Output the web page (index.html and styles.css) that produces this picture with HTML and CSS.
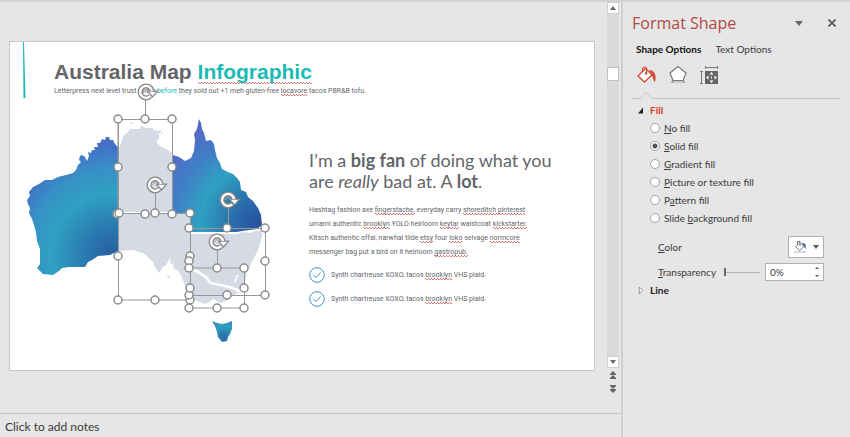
FILE: index.html
```html
<!DOCTYPE html>
<html lang="en">
<head>
<meta charset="utf-8">
<meta name="viewport" content="width=device-width, initial-scale=1">
<title>Australia Map Infographic</title>
<link rel="stylesheet" href="styles.css">
</head>
<body>
<div class="app">
  <main class="editor">
    <div class="workspace">
      <div class="stage">
        <article class="slide">
          <header class="slide-header">
            <svg class="accent" viewBox="0 0 3 56" aria-hidden="true"><path d="M0 0H1L2.500 56H.5Z" fill="#1cbab4"/></svg>
            <div>
              <h1 class="slide-title">Australia Map <span class="teal typo">Infographic</span></h1>
              <p class="subtitle">Letterpress next level trust funky <span class="teal">before</span> they sold out +1 meh gluten-free <span class="typo">locavore</span> tacos PBR&amp;B tofu.</p>
            </div>
          </header>
          <div class="slide-body">
            <svg class="map" viewBox="10 98 299 250" role="img" aria-label="Map of Australia">
              <defs>
                <radialGradient id="west" gradientUnits="userSpaceOnUse" cx="112" cy="254" r="135">
                  <stop offset="0" stop-color="#2860a0"/><stop offset=".18" stop-color="#2a76b0"/><stop offset=".45" stop-color="#2fa1c2"/><stop offset=".62" stop-color="#3791c6"/><stop offset=".8" stop-color="#4272c6"/><stop offset="1" stop-color="#5b55c4"/>
                </radialGradient>
                <radialGradient id="east" gradientUnits="userSpaceOnUse" cx="262" cy="226" r="125">
                  <stop offset="0" stop-color="#284f98"/><stop offset=".2" stop-color="#2a67aa"/><stop offset=".5" stop-color="#2fa1c2"/><stop offset=".72" stop-color="#417ec6"/><stop offset="1" stop-color="#5961c6"/>
                </radialGradient>
                <radialGradient id="south" gradientUnits="userSpaceOnUse" cx="224" cy="338" r="17">
                  <stop offset="0" stop-color="#286aa8"/><stop offset=".7" stop-color="#2f9fc0"/><stop offset="1" stop-color="#3a86c4"/>
                </radialGradient>
                <circle id="grip" r="4" fill="#fff" stroke="#8c8c8c" stroke-width="1.5"/>
                <g id="turn" fill="none">
                  <path d="M4.3 4.2A6 6 0 1 1 6 -1" stroke="#868686" stroke-width="5"/>
                  <path d="M1.5-.8H11.5L6.5 5Z" fill="#fff" stroke="#868686" stroke-width="1.2"/>
                  <path d="M4.3 4.2A6 6 0 1 1 6 -1" stroke="#fff" stroke-width="2.4"/>
                  <path d="M-2.5 0A2.6 2.6 0 0 1 2-1.6" stroke="#aaa" stroke-width="1"/>
                </g>
              </defs>
              <path fill="url(#west)" d="M118 147L115 144 113 140 110 140 109 137 106 137 105 140 102 139 100 143 97 143 98 147 94 147 95 150 92 150 91 153 88 152 89 156 87 161 85 157 82 155 80 156 79 160 81 162 78 165 76 170 73 173 66 175 58 177 52 180 45 180 39 184 33 187 29 192 30 196 27 200 28 204 30 208 29 213 32 219 34 225 36 232 37 241 40 249 40 259 40 264 37 268 43 274 53 275 59 271 62 268 69 267 85 267 88 262 92 260 98 256 110 255 118 251Z"/>
              <g fill="#d6dae4">
                <path d="M119 148L122 141 123 136 127 133 130 129 140 129 141 125 145 128 152 128 156 131 162 130 159 134 159 138 156 142 160 146 166 149 172 153V212H119ZM129 124l3-2 1 2zM161 132l2 1-1 2z"/>
                <path d="M119 214H190V298L187 291 184 283 181 275 177 270 173 268 174 262 171 265 170 258 166 265 163 267 159 273 156 269 153 262 148 257 143 253 138 252 134 250 119 251ZM166 277l5-2-2 3z"/>
                <path d="M191 234H237L242 232 250 233 255 231 262 230 262 236 258 250 252 262 247 273 243 290 232 287 220 284 212 283 207 276 198 271 191 268Z"/>
                <path d="M191 270L197 273 204 277 210 284 220 286 231 289 241 292 235 294 230 299 220 303 214 299 205 304 197 301 191 298Z"/>
              </g>
              <path d="M191 268L198 271 205 277 211 283 220 284.500 232 287 237 291 244 292M235 282l2-6 2 0" fill="none" stroke="#fff" stroke-width="1.500"/>
              <path fill="url(#east)" d="M173 155L179 157 185 161 191 158 194 151 195 140 194 134 197 129 199 119 201 123 202 129 204 133 206 141 211 140 214 144 215 150 217 158 220 163 222 169 228 172 233 174 237 178 240 182 241 190 246 192 248 197 253 201 258 208 261 215 262 225 257 229 249 230 242 231 237 232H190V213H173Z"/>
              <path fill="url(#south)" d="M212 321L217 323 222 324 227 323 232 321 232 329 230 334 228 337 227 341 222 342 218 337 217 332 215 326Z"/>
              <g fill="none" stroke="#979797">
                <path d="M118 119.500H172.500V213.500H118ZM118.500 119V300H190M190.500 213V308H244.500V268H190M155 213.500H190M190 228.500H265.500V295.500H190M145.500 97V119M155.500 190V213M228.500 205V228M217.500 248V268"/>
              </g>
              <g>
                <use href="#grip" x="118" y="119"/><use href="#grip" x="145" y="119"/><use href="#grip" x="172" y="119"/><use href="#grip" x="118" y="167"/><use href="#grip" x="172" y="167"/><use href="#grip" x="117" y="214"/><use href="#grip" x="145" y="214"/><use href="#grip" x="172" y="214"/>
                <use href="#grip" x="119" y="213"/><use href="#grip" x="155" y="213"/><use href="#grip" x="190" y="213"/><use href="#grip" x="118" y="256"/><use href="#grip" x="190" y="256"/><use href="#grip" x="118" y="300"/><use href="#grip" x="155" y="300"/><use href="#grip" x="190" y="300"/>
                <use href="#grip" x="189" y="228"/><use href="#grip" x="227" y="228"/><use href="#grip" x="265" y="228"/><use href="#grip" x="189" y="261"/><use href="#grip" x="265" y="261"/><use href="#grip" x="189" y="295"/><use href="#grip" x="227" y="295"/><use href="#grip" x="265" y="295"/>
                <use href="#grip" x="189" y="268"/><use href="#grip" x="217" y="268"/><use href="#grip" x="244" y="268"/><use href="#grip" x="190" y="288"/><use href="#grip" x="244" y="288"/><use href="#grip" x="189" y="308"/><use href="#grip" x="217" y="308"/><use href="#grip" x="244" y="308"/>
                <use href="#turn" x="146" y="92"/><use href="#turn" x="155" y="185"/><use href="#turn" x="228" y="200"/><use href="#turn" x="217" y="242"/>
              </g>
            </svg>
            <section class="copy">
              <h2 class="lead">I’m a <b>big fan</b> of doing what you<br>are <i>really</i> bad at. A <b>lot</b>.</h2>
              <p class="para">Hashtag fashion axe <span class="typo">fingerstache,</span> everyday carry <span class="typo">shoreditch pinterest</span><br>umami authentic <span class="typo">brooklyn</span> YOLO heirloom <span class="typo">keytar</span> waistcoat <span class="typo">kickstarter.</span><br>Kitsch authentic offal, narwhal tilde <span class="typo">etsy</span> four <span class="typo">loko</span> selvage <span class="typo">normcore</span><br>messenger bag put a bird on it heirloom <span class="typo">gastropub.</span></p>
              <ul class="checks">
                <li><svg class="check" viewBox="0 0 16 16" aria-hidden="true"><circle cx="8" cy="8" r="7.300"/><path d="M4.300 8.200L7 10.600L11.500 5.500"/></svg><span>Synth chartreuse XOXO, tacos <span class="typo">brooklyn</span> VHS plaid.</span></li>
                <li><svg class="check" viewBox="0 0 16 16" aria-hidden="true"><circle cx="8" cy="8" r="7.300"/><path d="M4.300 8.200L7 10.600L11.500 5.500"/></svg><span>Synth chartreuse XOXO, tacos <span class="typo">brooklyn</span> VHS plaid.</span></li>
              </ul>
            </section>
          </div>
        </article>
      </div>
      <div class="scroll">
        <button class="scroll-btn" aria-label="Scroll up"><svg viewBox="0 0 6 4"><path d="M0 4L3 0L6 4Z"/></svg></button>
        <div class="track"><button class="thumb" aria-label="Scroll position"></button></div>
        <button class="scroll-btn" aria-label="Scroll down"><svg viewBox="0 0 6 4"><path d="M0 0H6L3 4Z"/></svg></button>
        <button class="page-btn" aria-label="Previous slide"><svg viewBox="0 0 6 8"><path d="M0 3L3 0L6 3V4H0ZM0 7L3 4L6 7V8H0Z"/></svg></button>
        <button class="page-btn" aria-label="Next slide"><svg viewBox="0 0 6 8"><path d="M0 0H6V1L3 4L0 1ZM0 4H6V5L3 8L0 5Z"/></svg></button>
      </div>
    </div>
    <div class="notes">Click to add notes</div>
  </main>

  <aside class="pane">
    <header class="pane-head">
      <h2 class="pane-title">Format Shape</h2>
      <button class="bare" aria-label="Pane options"><svg class="tri" viewBox="0 0 8 5"><path d="M0 0H8L4 5Z" fill="#666"/></svg></button>
      <button class="bare" aria-label="Close"><svg class="close" viewBox="0 0 8 8"><path d="M.5.5L7.500 7.500M7.500.5L.5 7.500" stroke="#555" stroke-width="1.600"/></svg></button>
    </header>
    <nav class="tabs">
      <button class="tab active">Shape Options</button>
      <button class="tab">Text Options</button>
    </nav>
    <div class="kinds">
      <button class="bare" aria-label="Fill and line"><svg class="kind" viewBox="0 0 20 20"><path d="M1 11L8.500 3.500L15 10L7.500 17Z" fill="#fff" stroke="#d24a35" stroke-width="1.300"/><path d="M5.500 7V4A2 2 0 0 1 9.500 4V9" fill="none" stroke="#d24a35" stroke-width="1.200"/><circle cx="9" cy="8.500" r="1.200" fill="#d24a35"/><path d="M12 5C17 5 20 9 18 17C16 16 16 12 14.500 9Z" fill="#d24a35"/></svg></button>
      <button class="bare" aria-label="Effects"><svg class="kind" viewBox="0 0 20 20"><path d="M4 15H16L18 18H2Z" fill="#c9c9c9"/><path d="M10 1.500L18 8L15 15.500H5L2 8Z" fill="#fff" stroke="#777" stroke-width="1.200"/><path d="M5 15.500L4 18M15 15.500L16 18" stroke="#888"/></svg></button>
      <button class="bare" aria-label="Size and properties"><svg class="kind" viewBox="0 0 20 20"><path d="M6.500 1V4M18.500 1V4M6 2.500H19M1 6.500H4M1 18.500H4M2.500 6V19" stroke="#777" fill="none"/><path d="M6 6H19V19H6Z" fill="#666"/><path d="M12.500 7L14.500 9.500H10.500ZM12.500 18L14.500 15.500H10.500ZM7 12.500L9.500 10.500V14.500ZM18 12.500L15.500 10.500V14.500ZM12 11.500h1v2h-1z" fill="#fff"/></svg></button>
    </div>
    <div class="rule"><svg class="notch" viewBox="0 0 12 7" aria-hidden="true"><path d="M0 7V6.500L6 .7L12 6.500V7Z" fill="#e6e6e6"/><path d="M0 6.500L6 .7L12 6.500" fill="none" stroke="#c6c6c6"/></svg></div>

    <button class="section open"><svg class="caret" viewBox="0 0 6 6"><path d="M0 6H5V0Z" fill="#222"/></svg>Fill</button>
    <div class="options" role="radiogroup" aria-label="Fill">
      <label><input type="radio" name="fill"><span><u>N</u>o fill</span></label>
      <label><input type="radio" name="fill" checked><span><u>S</u>olid fill</span></label>
      <label><input type="radio" name="fill"><span><u>G</u>radient fill</span></label>
      <label><input type="radio" name="fill"><span><u>P</u>icture or texture fill</span></label>
      <label><input type="radio" name="fill"><span>P<u>a</u>ttern fill</span></label>
      <label><input type="radio" name="fill"><span>Slide <u>b</u>ackground fill</span></label>
    </div>
    <div class="field color-field">
      <label for="color"><u>C</u>olor</label>
      <button id="color" class="color"><svg class="bucket" viewBox="0 0 14 14"><path d="M1 11H13V13H1Z" fill="#d0d6e2"/><path d="M2.500 6.500L7 2.500L11 6.500L6.500 10.500Z" fill="#fff" stroke="#777"/><path d="M4.500 4.500V1.500H7V6" fill="none" stroke="#777"/><path d="M9 3C12.500 3 13.500 5 12.500 9L10.500 5.500Z" fill="#3a62a8"/></svg><svg class="drop" viewBox="0 0 6 4"><path d="M0 0H6L3 4Z" fill="#555"/></svg></button>
    </div>
    <div class="field">
      <label for="alpha"><u>T</u>ransparency</label>
      <input id="alpha" class="slider" type="range" min="0" max="100" value="0">
      <div class="spin">
        <input type="text" value="0%" aria-label="Transparency percent">
        <div class="steps">
          <button aria-label="Increase"><svg viewBox="0 0 6 4"><path d="M1 3L3 1L5 3Z"/></svg></button>
          <button aria-label="Decrease"><svg viewBox="0 0 6 4"><path d="M1 1H5L3 3Z"/></svg></button>
        </div>
      </div>
    </div>
    <button class="section"><svg class="caret" viewBox="0 0 6 8"><path d="M1 0V8L5 4Z" fill="#fff" stroke="#888"/></svg>Line</button>
  </aside>
</div>
</body>
</html>
```
FILE: styles.css
```css
* { box-sizing: border-box; }

body {
  margin: 0;
  background: #e6e6e6;
  color: #3a3a3a;
  font: 10px/18px Lato, "Noto Sans", sans-serif;
}

h1, h2, p, ul { margin: 0; padding: 0; font-weight: 400; }
button, input { margin: 0; font: inherit; color: inherit; }
button { padding: 0; border: 0; background: none; }
svg { display: block; flex: none; }

.app {
  display: grid;
  grid-template-columns: minmax(0, 1fr) 229px;
  min-height: 100vh;
  border-top: 2px solid #d2d2d2;
}

/* Editor */
.editor { display: flex; flex-direction: column; }
.workspace { flex: 1; display: flex; }
.stage { flex: 1; min-width: 0; padding: 39px 12px 0 9px; }

.slide {
  aspect-ratio: 16 / 9;
  background: #fff;
  border: 1px solid #c9c9c9;
  color: #636569;
}
.slide-header { display: flex; gap: 28px; padding-left: 13px; }
.accent { width: 3px; height: 56px; }
.slide-title {
  margin-top: 18px;
  font: bold 21px/24px "Liberation Sans", Arial, sans-serif;
}
.subtitle { font: 7px/14px Roboto, sans-serif; }
.teal { color: #1cbab4; }

/* Two staggered pixel rows form the spell-check squiggle */
.typo {
  padding-bottom: 1px;
  background:
    repeating-linear-gradient(90deg, #dc5a55 0 1px, transparent 1px 3px) 0 calc(100% - 1px) / 100% 1px no-repeat,
    repeating-linear-gradient(90deg, transparent 0 1px, #dc8a86 1px 3px) 0 100% / 100% 1px no-repeat;
}

.slide-body { display: grid; grid-template-columns: 299px minmax(0, 1fr); }
.map { width: 299px; height: 250px; overflow: visible; }
.copy { padding-top: 52px; font: 7px/14px Roboto, sans-serif; white-space: nowrap; }
.lead { font: 18px/21px Lato, sans-serif; }
.para { margin-top: 11px; }
.checks { display: grid; gap: 8px; margin-top: 8px; list-style: none; }
.checks li { display: flex; align-items: center; gap: 6px; }
.check { width: 16px; height: 16px; fill: none; stroke: #4c93bd; }

.scroll { display: flex; flex-direction: column; align-items: flex-start; width: 14px; }
.scroll-btn {
  display: grid;
  place-items: center;
  width: 12px;
  height: 12px;
  background: #fff;
  border: 1px solid #d0d0d0;
}
.scroll-btn svg { width: 6px; height: 4px; fill: #666; }
.track { flex: 1; width: 12px; padding-top: 53px; background: #dadada; }
.thumb { display: block; width: 12px; height: 14px; background: #fff; border: 1px solid #c0c0c0; }
.page-btn { display: grid; place-items: center; width: 12px; height: 14px; }
.page-btn svg { width: 6px; height: 8px; fill: #666; }
.page-btn:last-child { margin-bottom: 17px; }

.notes {
  height: 24px;
  padding-left: 5px;
  border-top: 1px solid #c6c6c6;
  font-size: 12px;
  line-height: 25px;
}

/* Format pane */
.pane {
  display: flex;
  flex-direction: column;
  align-items: stretch;
  padding: 8px 10px 0 9px;
  border-left: 2px solid #cfcfcf;
}
.pane-head { display: flex; align-items: center; gap: 25px; padding-right: 4px; }
.pane-title { flex: 1; color: #b04a42; font: 16px/26px "Open Sans", sans-serif; }
.bare { display: block; }
.tri { width: 8px; height: 5px; }
.close { width: 8px; height: 8px; }

.tabs { display: flex; gap: 14px; margin-top: 4px; padding-left: 4px; }
.tab.active { font-weight: 700; color: #111; }
.kinds { display: flex; gap: 11px; margin-top: 7px; padding-left: 5px; }
.kind { width: 20px; height: 20px; }
.rule { height: 14px; padding: 7px 0 0 8px; border-bottom: 1px solid #c6c6c6; }
.notch { width: 12px; height: 7px; }

.section {
  display: flex;
  align-items: center;
  gap: 6px;
  padding-left: 6px;
  color: #222;
  font-weight: 700;
  text-align: left;
}
.section.open { margin-top: 2px; color: #d83b25; }
.caret { width: 6px; height: 7px; }

.options { display: grid; padding-left: 18px; }
.options label { display: flex; align-items: center; gap: 4px; }
.options input {
  appearance: none;
  width: 10px;
  height: 10px;
  border: 1px solid #a3a3a3;
  border-radius: 50%;
  background: #fff;
}
.options input:checked { background: radial-gradient(circle, #555 2px, #fff 3px); }

.field { display: flex; align-items: center; padding: 0 16px 0 26px; }
.color-field { justify-content: space-between; margin: 9px 0 5px; }
.color {
  display: flex;
  align-items: center;
  justify-content: center;
  gap: 6px;
  width: 36px;
  height: 22px;
  background: #fff;
  border: 1px solid #b0b0b0;
}
.bucket { width: 14px; height: 14px; }
.drop { width: 6px; height: 4px; }

.slider {
  appearance: none;
  flex: 1;
  min-width: 0;
  height: 8px;
  margin: 0 5px 0 8px;
  background: linear-gradient(#b5b5b5, #b5b5b5) center / 100% 1px no-repeat;
}
.slider::-webkit-slider-thumb { appearance: none; width: 2px; height: 8px; background: #666; }
.spin { display: flex; width: 59px; height: 18px; background: #fff; border: 1px solid #b0b0b0; }
.spin input { flex: 1; min-width: 0; padding: 0 0 0 4px; border: 0; background: none; }
.steps { display: grid; width: 12px; }
.steps button { display: grid; place-items: center; }
.steps svg { width: 6px; height: 4px; fill: #555; }
```
